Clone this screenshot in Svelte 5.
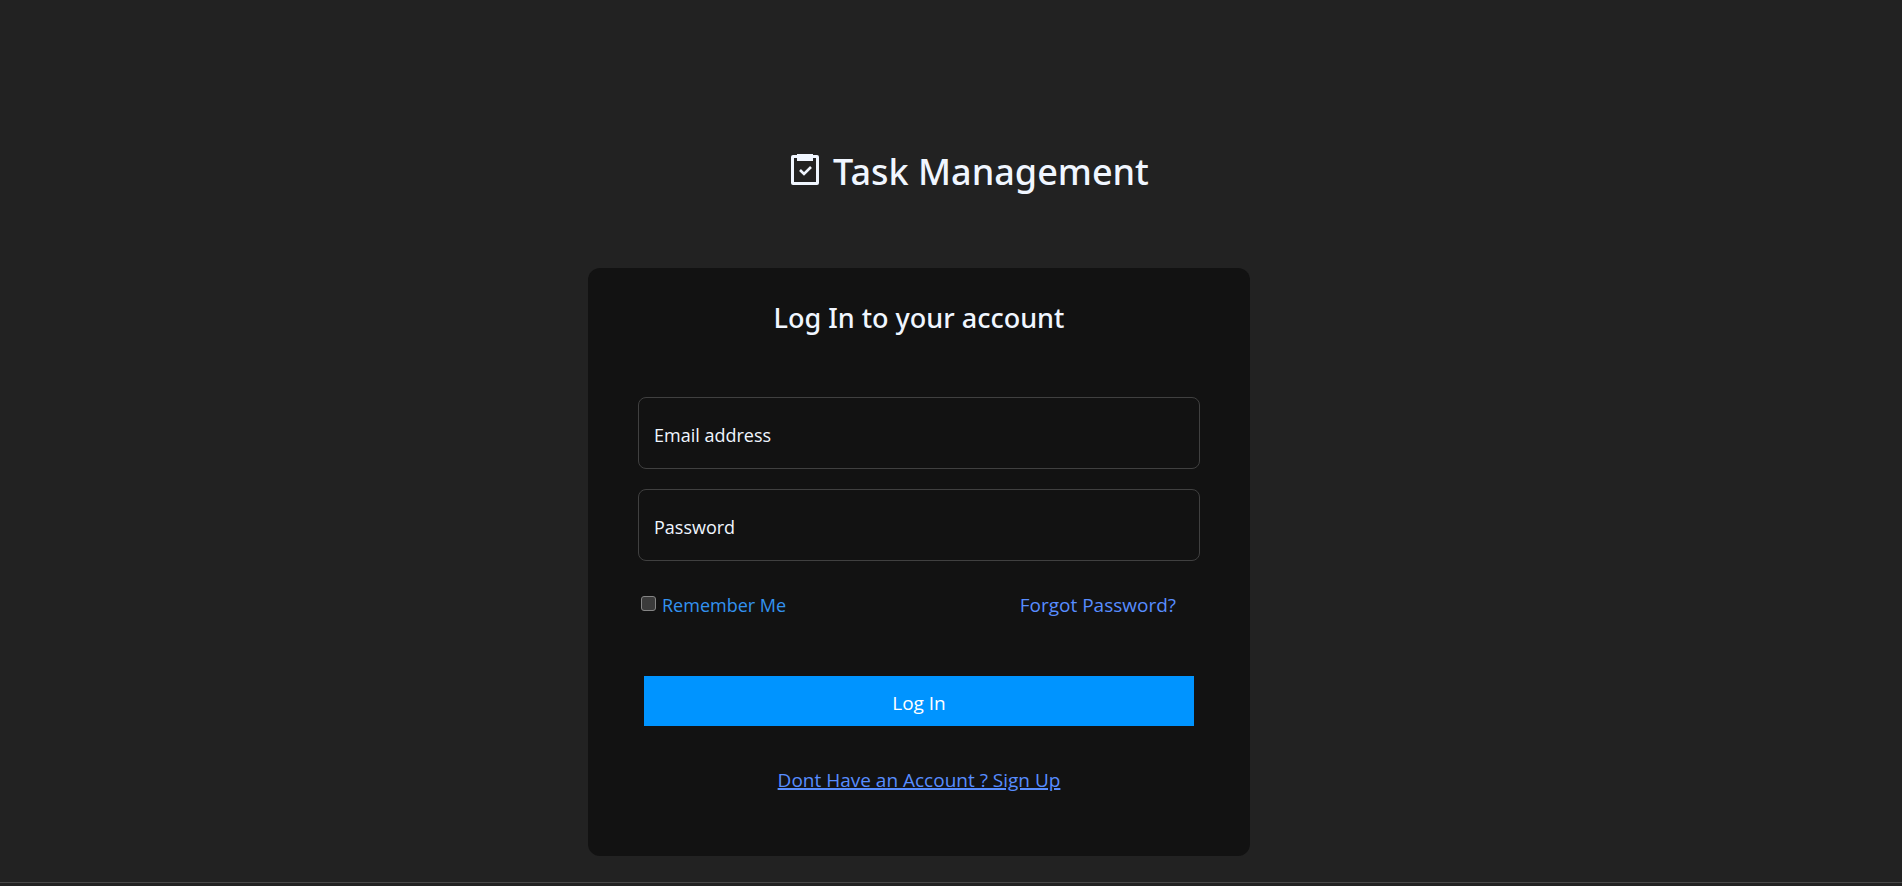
<script>
  let email = $state('');
  let password = $state('');
  let remember = $state(false);
</script>

<div class="page">
  <main>
    <h1>
      <svg viewBox="0 0 28 32" width="28" height="32" aria-hidden="true">
        <path fill="currentColor" fill-rule="evenodd" d="M2 1H6V0H22V1H26Q28 1 28 3V29Q28 31 26 31H2Q0 31 0 29V3Q0 1 2 1ZM3 4V28H25V4H22V7H6V4Z" />
        <path d="M9 16L13 20L20 13" fill="none" stroke="currentColor" stroke-width="2.6" />
      </svg>
      <span>Task Management</span>
    </h1>

    <form class="card" onsubmit={(e) => e.preventDefault()}>
      <h2>Log In to your account</h2>

      <input class="field" type="email" aria-label="Email address" placeholder="Email address" bind:value={email} />
      <input class="field" type="password" aria-label="Password" placeholder="Password" bind:value={password} />

      <div class="options">
        <label class="remember">
          <input type="checkbox" bind:checked={remember} />
          <span>Remember Me</span>
        </label>
        <a class="forgot" href="#forgot">Forgot Password?</a>
      </div>

      <button type="submit">Log In</button>
      <a class="signup" href="#signup">Dont Have an Account ? Sign Up</a>
    </form>
  </main>
  <footer></footer>
</div>

<style>
  :global(body) {
    margin: 0;
    background: #222222;
  }

  .page {
    display: flex;
    flex-direction: column;
    min-height: 100vh;
    box-sizing: border-box;
    color: #f0f6ff;
    font-family: "Segoe UI", "Open Sans", "Noto Sans", sans-serif;
    font-size: 19px;
    line-height: 28px;
  }

  main {
    flex: 1;
    display: flex;
    flex-direction: column;
    align-items: center;
    padding: 144px 64px 26px 0;
  }

  h1 {
    display: flex;
    gap: 14px;
    margin: 0 0 68px 102px;
    font-family: "Segoe UI", "Noto Sans", "Open Sans", sans-serif;
    font-size: 36px;
    font-weight: 500;
    line-height: 56px;
  }

  h1 svg {
    margin-top: 10px;
  }

  .card {
    display: flex;
    flex-direction: column;
    width: 100%;
    max-width: 662px;
    box-sizing: border-box;
    padding: 30px 50px 62px;
    border-radius: 12px;
    background: #121212;
  }

  h2 {
    margin: 0 0 59px;
    font-family: "Segoe UI", "Noto Sans", "Open Sans", sans-serif;
    font-size: 27px;
    font-weight: 500;
    line-height: 40px;
    text-align: center;
  }

  .field {
    height: 72px;
    box-sizing: border-box;
    margin: 0 0 20px;
    padding: 3px 15px 0;
    border: 1px solid #404040;
    border-radius: 8px;
    background: transparent;
    color: inherit;
    font: inherit;
    font-size: 18px;
    outline: none;
  }

  .field::placeholder {
    color: #f0f6ff;
    opacity: 1;
  }

  .options {
    display: flex;
    justify-content: space-between;
    padding: 10px 24px 0 3px;
  }

  .remember {
    display: flex;
    align-items: center;
    gap: 6px;
    color: #3392f0;
    font-size: 18px;
  }

  .remember input {
    appearance: none;
    width: 15px;
    height: 15px;
    box-sizing: border-box;
    margin: 0 0 3px;
    border: 1px solid #858585;
    border-radius: 3px;
    background: #3b3b3b;
  }

  .remember input:checked {
    background: #0094ff;
  }

  a {
    color: #588dff;
  }

  .forgot {
    text-decoration: none;
  }

  button {
    height: 50px;
    margin: 57px 6px 40px;
    padding: 3px 0 0;
    border: 0;
    background: #0094ff;
    color: #ffffff;
    font: inherit;
  }

  .signup {
    align-self: center;
    text-decoration-thickness: 2px;
  }

  footer {
    height: 3px;
    border-top: 1px solid #484848;
  }
</style>
